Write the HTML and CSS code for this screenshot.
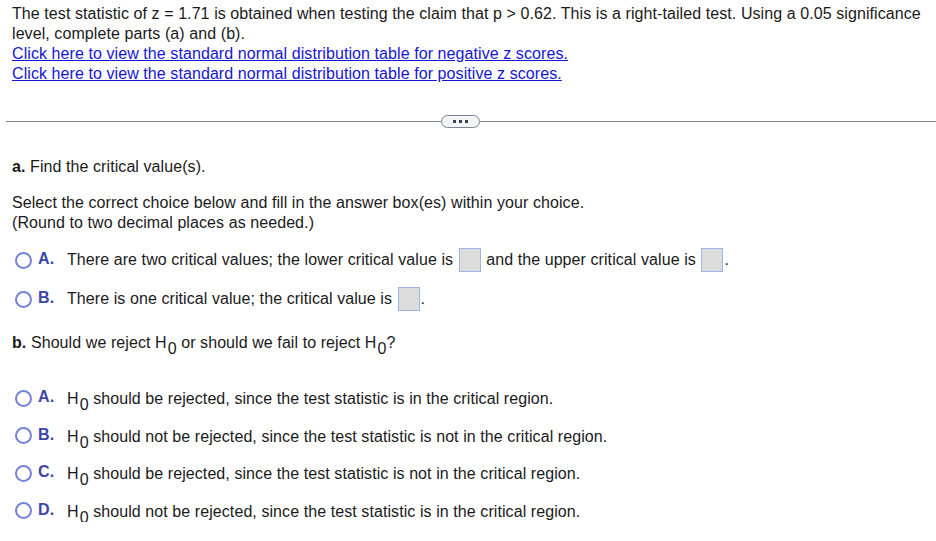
FILE: index.html
```html
<!DOCTYPE html>
<html>
<head>
<meta charset="utf-8">
<link rel="stylesheet" href="styles.css">
</head>
<body>
<div class="intro">
  <p class="line">The test statistic of z = 1.71 is obtained when testing the claim that p &gt; 0.62. This is a right-tailed test. Using a 0.05 significance level, complete parts (a) and (b).</p>
  <a class="link" href="#">Click here to view the standard normal distribution table for negative z scores.</a>
  <a class="link" href="#">Click here to view the standard normal distribution table for positive z scores.</a>
</div>
<div class="sep">
  <div class="rule rule-left"></div>
  <div class="pill"><span></span><span></span><span></span></div>
  <div class="rule"></div>
</div>
<div class="part-a">
  <p class="q"><b>a.</b> Find the critical value(s).</p>
  <p class="instr">Select the correct choice below and fill in the answer box(es) within your choice.<br>(Round to two decimal places as needed.)</p>
  <div class="opt opt-a1"><span class="radio"></span><span class="letter">A.</span><span class="txt">There are two critical values; the lower critical value is <span class="box"></span> and the upper critical value is <span class="box"></span>.</span></div>
  <div class="opt opt-a2"><span class="radio"></span><span class="letter">B.</span><span class="txt">There is one critical value; the critical value is <span class="box"></span>.</span></div>
</div>
<p class="q qb"><b>b.</b> Should we reject H<sub>0</sub> or should we fail to reject H<sub>0</sub>?</p>
<div class="part-b">
  <div class="opt"><span class="radio"></span><span class="letter">A.</span><span class="txt">H<sub>0</sub> should be rejected, since the test statistic is in the critical region.</span></div>
  <div class="opt"><span class="radio"></span><span class="letter">B.</span><span class="txt">H<sub>0</sub> should not be rejected, since the test statistic is not in the critical region.</span></div>
  <div class="opt"><span class="radio"></span><span class="letter">C.</span><span class="txt">H<sub>0</sub> should be rejected, since the test statistic is not in the critical region.</span></div>
  <div class="opt"><span class="radio"></span><span class="letter">D.</span><span class="txt">H<sub>0</sub> should not be rejected, since the test statistic is in the critical region.</span></div>
</div>
</body>
</html>
```
FILE: styles.css
```css
html, body { margin: 0; padding: 0; background: #fff; }
body {
  font-family: "Liberation Sans", Arial, sans-serif;
  font-size: 16px;
  letter-spacing: 0.08px;
  color: #1a1a1a;
  line-height: 20px;
  width: 936px;
  overflow: hidden;
}
p { margin: 0; }
.intro { padding: 4px 12px 0 12px; }
.line { margin: 0; }
.link { display: block; color: #1515d8; text-decoration: underline; }
.sep { display: flex; align-items: center; margin: 30px 0 0 6px; height: 14px; }
.rule { flex: 1; height: 1px; background: #7a8595; }
.rule-left { flex: none; width: 435px; }
.pill {
  width: 37px; height: 11px; border: 1px solid #7a8595; border-radius: 7px;
  background: #f3f4f6; display: flex; justify-content: center; align-items: center; gap: 3px;
}
.pill span { width: 3px; height: 3px; background: #3c4450; }
.part-a { padding: 0 12px; }
.q { padding-left: 12px; }
.part-a .q { padding-left: 0; margin-top: 29px; }
.instr { margin-top: 16px; }
.opt { display: flex; align-items: center; }
.opt-a1 { margin-top: 15px; height: 26px; }
.opt-a2 { margin-top: 13px; height: 26px; }
.radio {
  width: 13px; height: 13px; border: 2px solid #7583d4; border-radius: 50%;
  margin-left: 3px; flex: none; margin-top: -2px;
}
.letter { font-weight: bold; color: #3a46a8; width: 29px; margin-left: 6px; flex: none; position: relative; top: -2px; }
.txt { white-space: nowrap; }
.box {
  display: inline-block; width: 20px; height: 22px; background: #dcdcdc;
  border: 1px solid #9fb5e8; vertical-align: middle; margin: 0 1px;
  position: relative; top: -1px;
}
sub { font-size: 16px; vertical-align: baseline; position: relative; top: 6px; line-height: 0; margin-left: 1px; }
.qb { margin-top: 20px; }
.part-b { padding: 36px 12px 0 12px; display: flex; flex-direction: column; gap: 17.5px; }
.part-b .opt { height: 20px; }
```
